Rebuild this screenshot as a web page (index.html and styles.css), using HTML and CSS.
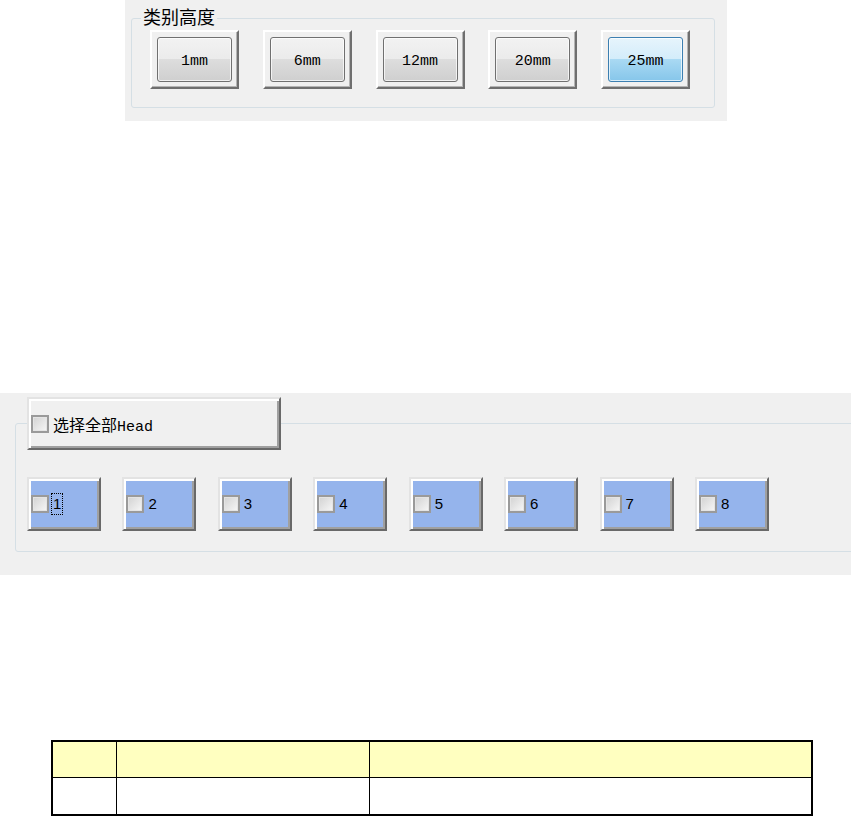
FILE: index.html
```html
<!DOCTYPE html>
<html lang="zh-CN">
<head>
    <meta charset="UTF-8">
    <meta name="viewport" content="width=device-width, initial-scale=1.0">
    <title>类别高度</title>
    <link rel="stylesheet" href="styles.css">
</head>
<body>
    <div class="panel size-panel">
        <fieldset class="group size-group">
            <legend>类别高度</legend>
            <div class="size-row">
                <button class="size-btn"><span class="face">1mm</span></button>
                <button class="size-btn"><span class="face">6mm</span></button>
                <button class="size-btn"><span class="face">12mm</span></button>
                <button class="size-btn"><span class="face">20mm</span></button>
                <button class="size-btn active"><span class="face">25mm</span></button>
            </div>
        </fieldset>
    </div>

    <div class="panel head-panel">
        <fieldset class="group head-group">
            <legend class="bevel head-all">
                <label class="head-all-label">
                    <input type="checkbox" class="check">
                    <span>选择全部<span class="mono">Head</span></span>
                </label>
            </legend>
            <div class="head-row">
                <label class="bevel head-chip"><input type="checkbox" class="check"><span class="focus">1</span></label>
                <label class="bevel head-chip"><input type="checkbox" class="check"><span>2</span></label>
                <label class="bevel head-chip"><input type="checkbox" class="check"><span>3</span></label>
                <label class="bevel head-chip"><input type="checkbox" class="check"><span>4</span></label>
                <label class="bevel head-chip"><input type="checkbox" class="check"><span>5</span></label>
                <label class="bevel head-chip"><input type="checkbox" class="check"><span>6</span></label>
                <label class="bevel head-chip"><input type="checkbox" class="check"><span>7</span></label>
                <label class="bevel head-chip"><input type="checkbox" class="check"><span>8</span></label>
            </div>
        </fieldset>
    </div>

    <table class="spec-table">
        <tr>
            <th class="col-a"></th>
            <th class="col-b"></th>
            <th class="col-c"></th>
        </tr>
        <tr>
            <td></td>
            <td></td>
            <td></td>
        </tr>
    </table>
</body>
</html>
```

FILE: styles.css
```css
body {
    margin: 0;
    font-family: "Liberation Sans", "Noto Sans CJK SC", sans-serif;
    color: #000;
    background-color: #fff;
}
.panel {
    background-color: #f0f0f0;
    box-sizing: border-box;
}
.group {
    margin: 0;
    min-width: 0;
    box-sizing: border-box;
    border: 1px solid #d5dfe5;
    border-radius: 3px;
}
.mono {
    font-family: "Liberation Mono", monospace;
}

/* 类别高度 */
.size-panel {
    margin-left: 125px;
    width: 602px;
    height: 121px;
    padding: 7px 0 0 6px;
}
.size-group {
    width: 584px;
    padding: 1px 0 18px 9px;
}
.size-group legend {
    padding: 0 2px;
    font-size: 18px;
    line-height: 22px;
}
.size-row {
    display: flex;
    gap: 23.75px;
    margin-left: 9px;
}
.size-btn {
    display: flex;
    width: 89px;
    height: 59px;
    box-sizing: border-box;
    padding: 5px;
    border: 2px solid;
    border-color: #fff #6f6f6f #6f6f6f #fff;
    box-shadow: inset -1px -1px 0 #b4b4b4;
    background-color: #f0f0f0;
    font-family: "Liberation Mono", monospace;
    font-size: 15px;
    color: #000;
    cursor: pointer;
}
.face {
    flex: 1;
    display: flex;
    align-items: center;
    justify-content: center;
    padding-top: 3px;
    border: 1px solid #707070;
    border-radius: 3px;
    background: linear-gradient(#f2f2f2, #ebebeb 50%, #dddddd 50%, #cfcfcf);
    box-shadow: inset 0 0 0 1px rgba(255, 255, 255, 0.7);
}
.size-btn.active .face {
    border-color: #3c7fb1;
    background: linear-gradient(#e6f4fc, #d3ecfa 50%, #a9d9f3 50%, #86c6ea);
}

/* Head */
.head-panel {
    margin-top: 272px;
    width: 851px;
    height: 182px;
    padding: 4px 0 0 15px;
    overflow: hidden;
}
.head-group {
    margin-right: -30px;
    padding: 27px 0 20px 11px;
}
.bevel {
    box-sizing: border-box;
    border: 2px solid;
    border-color: #e3e3e3 #696969 #696969 #e3e3e3;
    box-shadow: inset 2px 2px 0 #fff, inset -2px -2px 0 #a0a0a0;
}
.head-all {
    width: 254px;
    height: 53px;
    margin-top: 2px;
    padding: 0 0 0 2px;
    background-color: #f0f0f0;
}
.head-all-label {
    display: flex;
    align-items: center;
    gap: 4px;
    height: 100%;
    font-size: 16px;
}
.head-all-label .mono {
    font-size: 15px;
}
.head-row {
    display: flex;
    gap: 21.43px;
}
.head-chip {
    display: flex;
    align-items: center;
    gap: 4px;
    width: 74px;
    height: 54px;
    padding-left: 2px;
    background-color: #95b4ec;
    font-size: 15px;
    line-height: 18px;
}
.check {
    appearance: none;
    width: 18px;
    height: 18px;
    margin: 0;
    box-sizing: border-box;
    border: 2px solid #9a9a9a;
    background: linear-gradient(135deg, #d2d2d2, #f7f7f7);
    box-shadow: inset 0 0 0 1px #e4e4e4;
}
.focus {
    outline: 1px dotted #000;
    outline-offset: 1px;
}

/* table */
.spec-table {
    margin: 165px 0 0 51px;
    border: 2px solid #000;
    border-spacing: 0;
    table-layout: fixed;
}
.spec-table th,
.spec-table td {
    box-sizing: border-box;
    height: 36px;
    padding: 0;
    border-right: 1px solid #000;
    border-bottom: 1px solid #000;
}
.spec-table th {
    background-color: #ffffc0;
}
.spec-table th:last-child,
.spec-table td:last-child {
    border-right: 0;
}
.spec-table tr:last-child td {
    border-bottom: 0;
}
.col-a {
    width: 64px;
}
.col-b {
    width: 253px;
}
.col-c {
    width: 441px;
}
```
